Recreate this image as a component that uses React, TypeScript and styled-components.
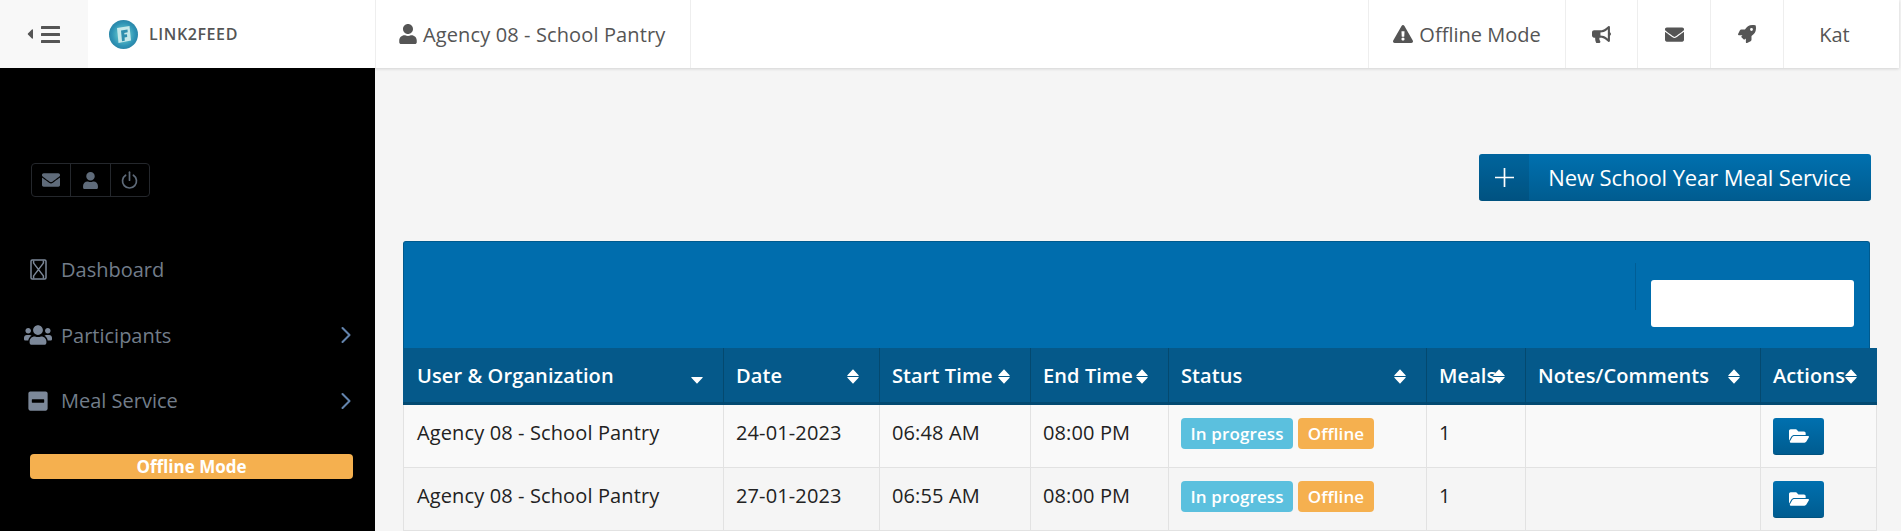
import React from 'react'
import styled, { createGlobalStyle } from 'styled-components'
import { ChevronRight } from 'lucide-react'
import {
  FaBullhorn,
  FaCaretLeft,
  FaEnvelope,
  FaExclamationTriangle,
  FaFolderOpen,
  FaMinusSquare,
  FaRocket,
  FaUser,
  FaUsers,
} from 'react-icons/fa'

const GlobalStyle = createGlobalStyle`
  html, body {
    margin: 0;
    height: 531px;
    overflow: hidden;
    background: #f5f5f5;
    font-family: "Open Sans", "Liberation Sans", sans-serif;
  }
`

const columns = [320, 156, 151, 138, 258, 99, 235, 117]

type SortState = 'both' | 'desc'

const headers: { label: string; sort: SortState }[] = [
  { label: 'User & Organization', sort: 'desc' },
  { label: 'Date', sort: 'both' },
  { label: 'Start Time', sort: 'both' },
  { label: 'End Time', sort: 'both' },
  { label: 'Status', sort: 'both' },
  { label: 'Meals', sort: 'both' },
  { label: 'Notes/Comments', sort: 'both' },
  { label: 'Actions', sort: 'both' },
]

const rows = [
  { org: 'Agency 08 - School Pantry', date: '24-01-2023', start: '06:48 AM', end: '08:00 PM', meals: 1 },
  { org: 'Agency 08 - School Pantry', date: '27-01-2023', start: '06:55 AM', end: '08:00 PM', meals: 1 },
]

function Logo() {
  return (
    <svg width="29" height="29" viewBox="0 0 29 29">
      <defs>
        <radialGradient id="logoBall" cx="50%" cy="50%" r="50%">
          <stop offset="45%" stopColor="#4fb3c4" />
          <stop offset="80%" stopColor="#2e93b5" />
          <stop offset="100%" stopColor="#2a86a8" />
        </radialGradient>
      </defs>
      <circle cx="14.5" cy="14.5" r="14.5" fill="url(#logoBall)" />
      <path d="M8 8 20.5 6 22 20.5 9.5 23Z" fill="#c6e9ea" />
      <path d="M12 10.5 18.5 9.5 18.7 12.3 15.3 12.9 15.4 14.6 18 14.2 18.2 17 15.6 17.4 15.8 20.8 13 21.2Z" fill="#2f8fae" />
    </svg>
  )
}

function BarsIcon() {
  return (
    <svg width="19" height="17" viewBox="0 0 19 17" fill="#555">
      <rect x="0" y="0" width="19" height="3" rx="0.6" />
      <rect x="0" y="7" width="19" height="3" rx="0.6" />
      <rect x="0" y="14" width="19" height="3" rx="0.6" />
    </svg>
  )
}

function HourglassIcon() {
  return (
    <svg width="17" height="21" viewBox="0 0 17 21" fill="none" stroke="#7c8899" strokeWidth="1.5">
      <rect x="1" y="1" width="15" height="19" rx="1.2" />
      <path d="M3.6 1.5v2.6l9.8 12.8v2.6M13.4 1.5v2.6L3.6 16.9v2.6" />
    </svg>
  )
}

function PowerIcon() {
  return (
    <svg width="17" height="19" viewBox="0 0 17 19" fill="none" stroke="#5f6b7a" strokeWidth="1.7" strokeLinecap="round">
      <path d="M8.5 1.2v8" />
      <path d="M4.6 4.2a7 7 0 1 0 7.8 0" />
    </svg>
  )
}

function PlusIcon() {
  return (
    <svg width="19" height="19" viewBox="0 0 19 19" stroke="#fff" strokeWidth="1.7">
      <path d="M9.5 0v19M0 9.5h19" />
    </svg>
  )
}

function SortIcon({ state }: { state: SortState }) {
  return (
    <SortMark width="12" height="15" viewBox="0 0 12 15" fill="#fff">
      {state === 'both' && <path d="M6 0.2 11.6 6.3a.4.4 0 0 1-.3.7H.7a.4.4 0 0 1-.3-.7Z" />}
      <path d="M.7 8h10.6a.4.4 0 0 1 .3.7L6 14.8.4 8.7A.4.4 0 0 1 .7 8Z" />
    </SortMark>
  )
}

export default function App() {
  return (
    <>
      <GlobalStyle />
      <Page>
        <TopBar>
          <Toggle>
            <FaCaretLeft size={16} color="#555" />
            <BarsIcon />
          </Toggle>
          <Brand>
            <Logo />
            <BrandName>LINK2FEED</BrandName>
          </Brand>
          <AgencyCell>
            <FaUser size={20} />
            Agency 08 - School Pantry
          </AgencyCell>
          <Spacer />
          <OfflineCell>
            <FaExclamationTriangle size={20} />
            Offline Mode
          </OfflineCell>
          <IconCell $width={72}>
            <FaBullhorn size={19} />
          </IconCell>
          <IconCell $width={73}>
            <FaEnvelope size={19} />
          </IconCell>
          <IconCell $width={73}>
            <FaRocket size={18} />
          </IconCell>
          <NameCell>Kat</NameCell>
        </TopBar>

        <Body>
          <Sidebar>
            <QuickButtons>
              <QuickButton>
                <FaEnvelope size={18} />
              </QuickButton>
              <QuickButton>
                <FaUser size={17} />
              </QuickButton>
              <QuickButton>
                <PowerIcon />
              </QuickButton>
            </QuickButtons>

            <Nav>
              <NavItem>
                <NavIcon>
                  <HourglassIcon />
                </NavIcon>
                <NavLabel>Dashboard</NavLabel>
              </NavItem>
              <NavItem>
                <NavIcon>
                  <FaUsers size={28} />
                </NavIcon>
                <NavLabel>Participants</NavLabel>
                <NavArrow size={28} strokeWidth={1.8} />
              </NavItem>
              <NavItem>
                <NavIcon>
                  <FaMinusSquare size={22} />
                </NavIcon>
                <NavLabel>Meal Service</NavLabel>
                <NavArrow size={28} strokeWidth={1.8} />
              </NavItem>
            </Nav>

            <OfflineBar>Offline Mode</OfflineBar>
          </Sidebar>

          <Main>
            <Actions>
              <NewButton>
                <NewButtonIcon>
                  <PlusIcon />
                </NewButtonIcon>
                <NewButtonLabel>New School Year Meal Service</NewButtonLabel>
              </NewButton>
            </Actions>

            <Panel>
              <PanelBar>
                <PanelDivider />
                <SearchBox aria-label="Search" />
              </PanelBar>
              <Table>
                <colgroup>
                  {columns.map((width, i) => (
                    <col key={i} width={width} />
                  ))}
                </colgroup>
                <thead>
                  <tr>
                    {headers.map((h) => (
                      <Th key={h.label}>
                        {h.label}
                        <SortIcon state={h.sort} />
                      </Th>
                    ))}
                  </tr>
                </thead>
                <tbody>
                  {rows.map((row) => (
                    <Row key={row.date}>
                      <Td>{row.org}</Td>
                      <Td>{row.date}</Td>
                      <Td>{row.start}</Td>
                      <Td>{row.end}</Td>
                      <Td>
                        <Badges>
                          <Badge $color="#5bc0de">In progress</Badge>
                          <Badge $color="#f5b04f">Offline</Badge>
                        </Badges>
                      </Td>
                      <Td>{row.meals}</Td>
                      <Td />
                      <Td>
                        <OpenButton>
                          <FaFolderOpen size={20} />
                        </OpenButton>
                      </Td>
                    </Row>
                  ))}
                </tbody>
              </Table>
            </Panel>
          </Main>
        </Body>
      </Page>
    </>
  )
}

const Page = styled.div`
  height: 531px;
  overflow: hidden;
  background: #f5f5f5;
`

const TopBar = styled.header`
  position: relative;
  z-index: 2;
  display: flex;
  width: 1899px;
  height: 68px;
  background: #fff;
  box-shadow: 0 1px 3px rgba(0, 0, 0, 0.14);
  color: #555;
  font-size: 20px;
`

const Toggle = styled.div`
  display: flex;
  align-items: center;
  gap: 3px;
  width: 88px;
  padding-left: 22px;
  box-sizing: border-box;
  background: #f8f8f8;
`

const Brand = styled.div`
  display: flex;
  align-items: center;
  gap: 11px;
  width: 287px;
  padding-left: 21px;
  box-sizing: border-box;
`

const BrandName = styled.span`
  font-size: 16px;
  font-weight: 600;
  letter-spacing: 0.6px;
  color: #555;
`

const AgencyCell = styled.div`
  display: flex;
  align-items: center;
  gap: 5px;
  width: 316px;
  padding-left: 22px;
  box-sizing: border-box;
  border-left: 1px solid #eee;
  border-right: 1px solid #eee;
  letter-spacing: 0.12px;
`

const Spacer = styled.div`
  flex: 1;
`

const OfflineCell = styled.div`
  display: flex;
  align-items: center;
  justify-content: center;
  gap: 6px;
  width: 197px;
  border-left: 1px solid #eee;
  box-sizing: border-box;
`

const IconCell = styled.div<{ $width: number }>`
  display: flex;
  align-items: center;
  justify-content: center;
  width: ${(p) => p.$width}px;
  border-left: 1px solid #eee;
  box-sizing: border-box;
`

const NameCell = styled(IconCell).attrs({ $width: 116 })`
  padding-right: 14px;
`

const Body = styled.div`
  display: flex;
  height: 463px;
`

const Sidebar = styled.aside`
  flex: 0 0 375px;
  background: #000;
  padding-top: 95px;
  box-sizing: border-box;
`

const QuickButtons = styled.div`
  display: flex;
  width: 119px;
  height: 34px;
  margin-left: 31px;
  border: 1px solid #24272c;
  border-radius: 4px;
  box-sizing: border-box;
`

const QuickButton = styled.div`
  flex: 1;
  display: flex;
  align-items: center;
  justify-content: center;
  color: #5f6b7a;

  & + & {
    border-left: 1px solid #24272c;
  }
`

const Nav = styled.nav`
  margin-top: 40px;
`

const NavItem = styled.div`
  display: flex;
  align-items: center;
  height: 65.5px;
  padding: 0 15px 0 18px;
`

const NavIcon = styled.span`
  display: flex;
  justify-content: center;
  width: 40px;
  margin-right: 3px;
  color: #7c8899;
`

const NavLabel = styled.span`
  flex: 1;
  color: #727d8a;
  font-size: 20px;
`

const NavArrow = styled(ChevronRight)`
  color: #6384ad;
`

const OfflineBar = styled.div`
  width: 323px;
  height: 25px;
  margin: 20px 0 0 30px;
  border-radius: 4px;
  background: #f5b04f;
  color: #fff;
  font-size: 17px;
  font-weight: 700;
  line-height: 25px;
  text-align: center;
`

const Main = styled.main`
  flex: 1;
  min-width: 0;
  padding: 86px 0 0 28px;
`

const Actions = styled.div`
  display: flex;
  justify-content: flex-end;
  margin-right: 30px;
`

const NewButton = styled.button`
  display: flex;
  align-items: stretch;
  height: 47px;
  padding: 0;
  border: 0;
  border-bottom: 1px solid #00527f;
  border-radius: 3px;
  background: linear-gradient(#0070af, #005c90);
  color: #fff;
  font-family: inherit;
  font-size: 22px;
  letter-spacing: -0.1px;
  overflow: hidden;
`

const NewButtonIcon = styled.span`
  display: flex;
  align-items: center;
  justify-content: center;
  width: 50px;
  background: rgba(0, 0, 0, 0.1);
`

const NewButtonLabel = styled.span`
  align-self: center;
  padding: 0 20px 0 19px;
`

const Panel = styled.section`
  width: 1467px;
  margin-top: 40px;
`

const PanelBar = styled.div`
  display: flex;
  align-items: flex-start;
  justify-content: flex-end;
  height: 107px;
  padding: 38px 15px 0 0;
  box-sizing: border-box;
  border: 1px solid #005a8e;
  border-bottom: 0;
  border-radius: 3px 3px 0 0;
  background: #006dad;
`

const PanelDivider = styled.div`
  width: 1px;
  height: 47px;
  margin: -17px 15px 0 0;
  background: #005e96;
`

const SearchBox = styled.input`
  width: 203px;
  height: 47px;
  padding: 0;
  box-sizing: border-box;
  border: 0;
  border-radius: 3px;
  background: #fff;
`

const Table = styled.table`
  width: 1474px;
  table-layout: fixed;
  border-collapse: separate;
  border-spacing: 0;
  font-size: 20px;
`

const Th = styled.th`
  position: relative;
  height: 57px;
  padding: 1px 12px 0;
  box-sizing: border-box;
  border-bottom: 3px solid #034a72;
  border-left: 1px solid #04496f;
  background: #05598a;
  color: #fff;
  font-weight: 600;
  letter-spacing: 0.1px;
  text-align: left;
  white-space: nowrap;

  &:first-child {
    padding-left: 14px;
    border-left: 0;
  }
`

const SortMark = styled.svg`
  position: absolute;
  top: 21px;
  right: 20px;
`

const Row = styled.tr`
  background: #f9f9f9;

  & + & {
    background: #f5f5f5;
  }
`

const Td = styled.td`
  height: 63px;
  padding: 13px 12px 12px;
  box-sizing: border-box;
  border-bottom: 1px solid #e2e2e2;
  border-left: 1px solid #e2e2e2;
  color: #222;
  letter-spacing: 0.12px;
  line-height: 30px;
  vertical-align: top;

  &:first-child {
    padding-left: 13px;
  }

  &:last-child {
    border-right: 1px solid #e2e2e2;
  }
`

const Badges = styled.div`
  display: flex;
  gap: 5px;
`

const Badge = styled.span<{ $color: string }>`
  height: 31px;
  padding: 0 9.5px;
  border-radius: 4px;
  background: ${(p) => p.$color};
  color: #fff;
  font-size: 17px;
  font-weight: 600;
  line-height: 31px;
`

const OpenButton = styled.button`
  display: flex;
  align-items: center;
  justify-content: center;
  width: 51px;
  height: 37px;
  padding: 0;
  border: 0;
  border-bottom: 1px solid #00527f;
  border-radius: 3px;
  background: linear-gradient(#0070af, #005c90);
  color: #fff;
`
